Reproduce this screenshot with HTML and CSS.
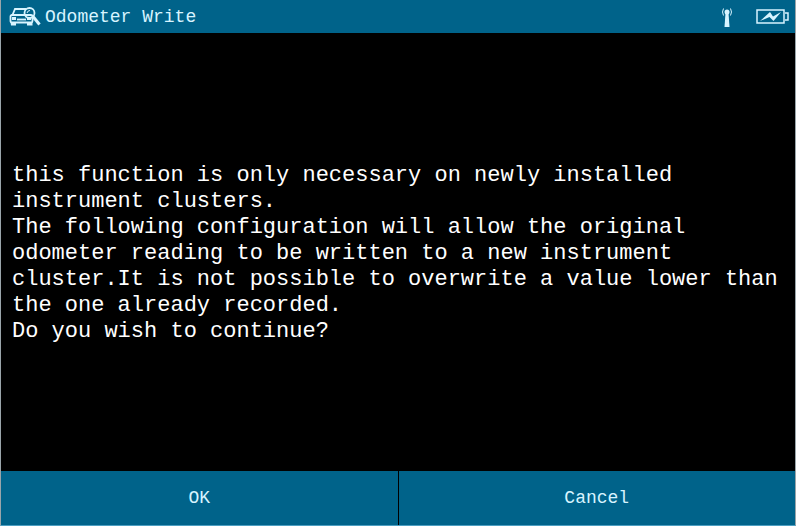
FILE: index.html
```
<!DOCTYPE html>
<html lang="en">
  <head>
    <meta charset="UTF-8" />
    <meta name="viewport" content="width=device-width, initial-scale=1.0" />
    <title>Odometer Write</title>
    <link rel="stylesheet" href="styles.css">
  </head>
  <body>
    <div class="screen">
      <header class="topbar">
        <svg class="car-icon" viewBox="0 0 32 20" width="32" height="20" aria-hidden="true">
          <g fill="none" stroke="currentColor" stroke-width="1.8">
            <path d="M3.500 8L6 2H17M2.500 8H18" />
            <rect x="1.500" y="8" width="22" height="7.500" rx="1.500" />
            <path d="M8 12.500H17" />
            <circle cx="20.500" cy="6" r="5" />
            <path d="M18 6Q18.500 3.500 21 3.500" stroke-width="1" />
          </g>
          <path d="M1.500 15H7V18.500H2ZM18 15H23.500V18.500H18Z" fill="currentColor" />
          <path d="M3 10H7V13H3ZM18 10.500H22V13H18Z" fill="currentColor" />
          <path d="M24 9.500L30.500 17.500" stroke="currentColor" stroke-width="3" />
        </svg>
        <h1 class="title">Odometer Write</h1>
        <div class="status">
          <svg viewBox="0 0 14 22" width="14" height="22" aria-hidden="true">
            <path d="M5.500 7H8.500L9.500 21H4.500Z" fill="currentColor" />
            <circle cx="7" cy="6" r="2.500" fill="currentColor" />
            <path d="M3.500 2.500Q1.500 6 3.500 9.500M10.500 2.500Q12.500 6 10.500 9.500" fill="none" stroke="currentColor" />
          </svg>
          <svg viewBox="0 0 34 18" width="34" height="18" aria-hidden="true">
            <rect x="1" y="2" width="27" height="13" fill="none" stroke="currentColor" stroke-width="1.500" />
            <path d="M29 5H32V12H29" fill="none" stroke="currentColor" stroke-width="1.500" />
            <path d="M4 13L14 4L17 8.500L25 4L17.500 13L13.500 9Z" fill="currentColor" />
          </svg>
        </div>
      </header>
      <main class="message">
        <p>
          this function is only necessary on newly installed instrument
          clusters.
        </p>
        <p>
          The following configuration will allow the original odometer reading
          to be written to a new instrument cluster.It is not possible to
          overwrite a value lower than the one already recorded.
        </p>
        <p>Do you wish to continue?</p>
      </main>
      <footer class="actions">
        <button type="button">OK</button>
        <button type="button">Cancel</button>
      </footer>
    </div>
  </body>
</html>
```
FILE: styles.css
```
* {
  margin: 0;
  padding: 0;
  box-sizing: border-box;
  font-family: "Liberation Mono", monospace;
}
body {
  background: black;
  color: white;
}
.screen {
  min-height: 100vh;
  display: flex;
  flex-direction: column;
  border: 1px solid #9aa5aa;
  border-top: none;
  border-bottom-color: #4c9fc2;
}
.topbar {
  display: flex;
  align-items: center;
  gap: 4px;
  height: 33px;
  padding: 0 5px 0 8px;
  background: #00638a;
  color: #d8f4ff;
}
.title {
  font-size: 18px;
  font-weight: normal;
}
.status {
  display: flex;
  align-items: center;
  gap: 22px;
  margin-left: auto;
}
.message {
  flex: 1;
  display: flex;
  flex-direction: column;
  justify-content: center;
  padding: 3px 11px 0;
  font-size: 22px;
  line-height: 26px;
}
.actions {
  display: grid;
  grid-template-columns: 1fr 1fr;
  gap: 1px;
  height: 54px;
}
.actions button {
  border: none;
  background: #00638a;
  color: #d8f4ff;
  font-size: 18px;
  cursor: pointer;
}
.actions button:hover {
  background: #0077a5;
}
```
